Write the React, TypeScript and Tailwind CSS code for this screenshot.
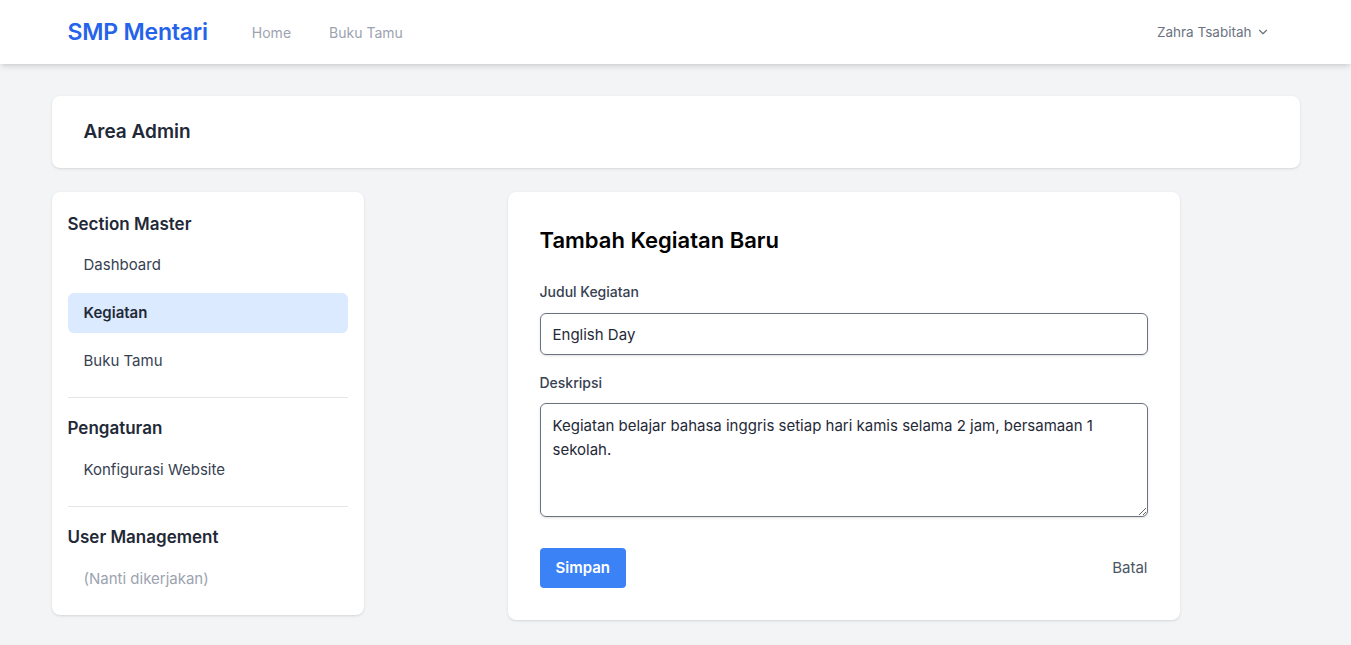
import { ChevronDown } from "lucide-react";

const font = { fontFamily: "Inter, 'Noto Sans', sans-serif" };

const menu = [
  {
    title: "Section Master",
    items: [
      { label: "Dashboard" },
      { label: "Kegiatan", active: true },
      { label: "Buku Tamu" },
    ],
  },
  { title: "Pengaturan", items: [{ label: "Konfigurasi Website" }] },
];

const Navbar = () => (
  <nav className="bg-white shadow-md">
    <div className="max-w-7xl mx-auto px-8 h-16 flex items-center justify-between">
      <div className="flex items-center">
        <span className="text-[23px] font-semibold text-[#2563eb] tracking-[-0.2px]">SMP Mentari</span>
        <div className="ml-11 flex gap-[38px] text-[14px] text-[#9ca3af]">
          <a>Home</a>
          <a>Buku Tamu</a>
        </div>
      </div>
      <button className="flex items-center gap-1 pl-3 pr-3.5 py-2 text-[13.5px] text-[#6b7280]">
        Zahra Tsabitah
        <ChevronDown size={14} strokeWidth={2} />
      </button>
    </div>
  </nav>
);

const Sidebar = () => (
  <aside className="w-[312px] shrink-0 self-start bg-white rounded-lg shadow-sm p-4 pb-[22px]">
    {menu.map((sec, i) => (
      <div key={sec.title} className="border-b border-gray-200 pb-4 mb-[18px]">
        <h3 className={"text-[17px] font-semibold text-[#1f2937] " + (i === 0 ? "mt-1 mb-[7px]" : "mb-[9px]")}>
          {sec.title}
        </h3>
        <div className="flex flex-col gap-2">
          {sec.items.map((it) => (
            <a
              key={it.label}
              className={
                "block px-4 py-2.5 rounded-md text-[15px] leading-5 " +
                (it.active ? "bg-[#dbeafe] font-semibold text-[#1f2937]" : "text-[#374151]")
              }
            >
              {it.label}
            </a>
          ))}
        </div>
      </div>
    ))}
    <h3 className="text-[17px] font-semibold text-[#1f2937] mb-2">User Management</h3>
    <p className="px-4 pt-[10px] pb-1 text-[15px] leading-5 text-[#9ca3af]">(Nanti dikerjakan)</p>
  </aside>
);

const FormCard = () => (
  <div className="w-[672px] mx-auto bg-white rounded-lg shadow-sm p-8">
    <h2 className="text-[22px] font-semibold text-black mb-6">Tambah Kegiatan Baru</h2>
    <label className="block text-[14px] font-medium text-[#374151] mb-[11px]">Judul Kegiatan</label>
    <input
      className="w-full h-[42px] px-3 border border-[#6b7280] rounded-md text-[15px] text-[#1f2937] shadow-sm outline-none"
      defaultValue="English Day"
      style={font}
    />
    <label className="block text-[14px] font-medium text-[#374151] mt-[17px] mb-2.5">Deskripsi</label>
    <textarea
      className="block w-full h-[114px] px-3 pt-2.5 pb-2 border border-[#6b7280] rounded-md text-[15px] leading-6 text-[#1f2937] shadow-sm outline-none"
      defaultValue="Kegiatan belajar bahasa inggris setiap hari kamis selama 2 jam, bersamaan 1 sekolah."
      style={font}
    />
    <div className="mt-[31px] flex items-center justify-between">
      <button className="h-10 px-4 bg-[#3b82f6] text-white font-semibold text-[15px] rounded">Simpan</button>
      <a className="text-[15px] text-[#4b5563]">Batal</a>
    </div>
  </div>
);

export default function App() {
  return (
    <div className="min-h-screen bg-[#f3f4f6]" style={font}>
      <Navbar />
      <div className="max-w-7xl mx-auto px-4 pt-8 pb-6">
        <div className="bg-white rounded-lg shadow-sm h-[72px] px-8 flex items-center">
          <h1 className="text-[19px] font-semibold text-[#1f2937]">Area Admin</h1>
        </div>
        <div className="mt-6 flex gap-6">
          <Sidebar />
          <div className="flex-1">
            <FormCard />
          </div>
        </div>
      </div>
    </div>
  );
}
